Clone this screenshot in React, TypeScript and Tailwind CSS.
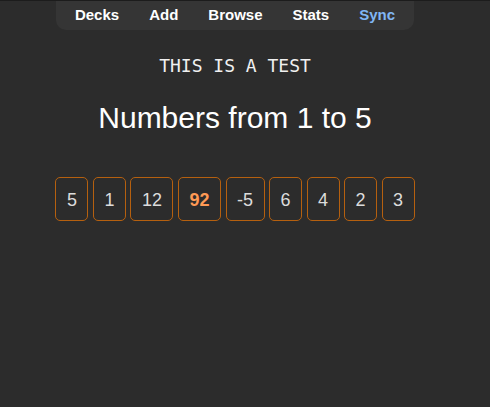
import React from "react";

const nums: { v: string; hl?: boolean }[] = [
  { v: "5" },
  { v: "1" },
  { v: "12" },
  { v: "92", hl: true },
  { v: "-5" },
  { v: "6" },
  { v: "4" },
  { v: "2" },
  { v: "3" },
];

export default function App() {
  return (
    <div className="h-[407px] w-full overflow-hidden bg-[#2c2c2c] border-t border-[#1c1c1c] font-['Liberation_Sans',Arial,sans-serif]">
      <div className="w-[470px] flex flex-col items-center">
        <nav className="-mt-px flex px-[4px] h-[30px] rounded-b-[10px] bg-[#353535]">
          {["Decks", "Add", "Browse", "Stats", "Sync"].map((t) => (
            <span
              key={t}
              className={`px-[15px] text-[15px] leading-[30px] font-bold ${
                t === "Sync" ? "text-[#80b6f4]" : "text-white"
              }`}
            >
              {t}
            </span>
          ))}
        </nav>
        <div className="mt-[24px] font-['DejaVu_Sans_Mono',monospace] text-[18px] leading-[24px] text-[#f0f0f0]">
          THIS IS A TEST
        </div>
        <h1 className="mt-[22px] text-[30px] leading-[36px] text-white">
          Numbers from 1 to 5
        </h1>
        <div className="mt-[41px] flex gap-[4.5px]">
          {nums.map((n, i) => (
            <div
              key={i}
              className={`border border-[#b5600f] rounded-[5px] px-[10.5px] pt-[11px] pb-[9px] text-[18px] leading-[22px] ${
                n.hl ? "font-bold text-[#ff9a55]" : "text-[#dcdcdc]"
              }`}
            >
              {n.v}
            </div>
          ))}
        </div>
      </div>
    </div>
  );
}
